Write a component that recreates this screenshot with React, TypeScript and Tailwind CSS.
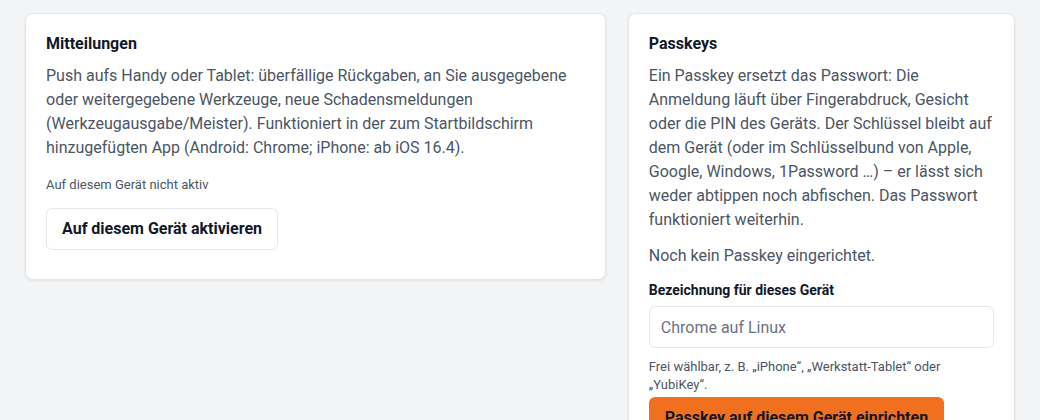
import React from "react";

export default function App() {
  return (
    <div className="min-h-[420px] bg-[#f3f4f6] px-[25px] pt-[13px] text-[#111827] [font-family:Roboto,'Liberation_Sans',sans-serif]">
      <div className="grid grid-cols-[3fr_2fr] items-start gap-[22px]">
        <section className="rounded-lg border border-[#e5e7eb] bg-white px-5 pt-[19px] pb-[29px] shadow-[0_1px_3px_rgba(0,0,0,0.08)]">
          <h2 className="text-[16px] font-bold leading-[22px] text-[#111827]">Mitteilungen</h2>
          <p className="mt-[9px] text-[16px] leading-[24px] text-[#4b5563]">
            Push aufs Handy oder Tablet: überfällige Rückgaben, an Sie ausgegebene oder weitergegebene Werkzeuge, neue Schadensmeldungen (Werkzeugausgabe/Meister). Funktioniert in der zum Startbildschirm hinzugefügten App (Android: Chrome; iPhone: ab iOS 16.4).
          </p>
          <p className="mt-[16px] text-[13px] leading-[18px] text-[#4b5563]">Auf diesem Gerät nicht aktiv</p>
          <button className="mt-[14px] h-[42px] rounded-md border border-[#e5e7eb] bg-white px-[15px] text-[16px] font-bold text-[#111827]">
            Auf diesem Gerät aktivieren
          </button>
        </section>
        <section className="rounded-lg border border-[#e5e7eb] bg-white px-5 pt-[19px] pb-6 shadow-[0_1px_3px_rgba(0,0,0,0.08)]">
          <h2 className="text-[16px] font-bold leading-[22px] text-[#111827]">Passkeys</h2>
          <p className="mt-[9px] text-[16px] leading-[24px] text-[#4b5563]">
            Ein Passkey ersetzt das Passwort: Die Anmeldung läuft über Fingerabdruck, Gesicht oder die PIN des Geräts. Der Schlüssel bleibt auf dem Gerät (oder im Schlüsselbund von Apple, Google, Windows, 1Password …) – er lässt sich weder abtippen noch abfischen. Das Passwort funktioniert weiterhin.
          </p>
          <p className="mt-3 text-[16px] leading-[24px] text-[#4b5563]">Noch kein Passkey eingerichtet.</p>
          <label className="mt-[12px] block text-[14px] font-bold leading-[20px] text-[#111827]">Bezeichnung für dieses Gerät</label>
          <input
            className="mt-[6px] block h-[42px] w-full rounded-md border border-[#e5e7eb] bg-white px-[11px] text-[16px] text-[#111827] placeholder:text-[#6b7280] outline-none"
            placeholder="Chrome auf Linux"
          />
          <p className="mt-[10px] pr-8 text-[13px] leading-[18px] text-[#4b5563]">
            Frei wählbar, z. B. „iPhone“, „Werkstatt-Tablet“ oder „YubiKey“.
          </p>
          <button className="mt-[3px] h-[42px] rounded-md bg-[#f0701f] px-4 text-[16px] font-bold text-[#111827]">
            Passkey auf diesem Gerät einrichten
          </button>
        </section>
      </div>
    </div>
  );
}
